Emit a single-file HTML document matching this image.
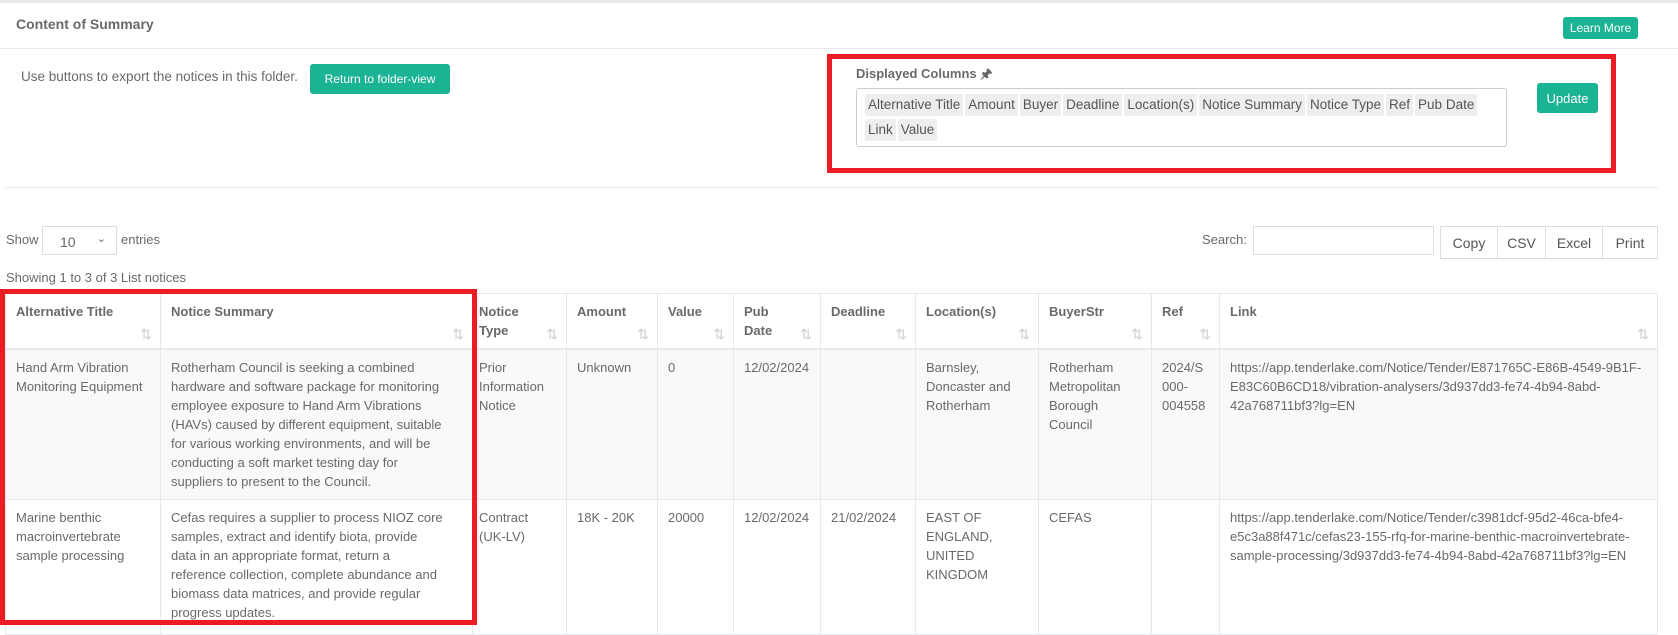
<!DOCTYPE html>
<html><head><meta charset="utf-8"><style>
*{box-sizing:border-box;margin:0;padding:0}
body{width:1678px;height:625px;overflow:hidden;background:#fff;font-family:"Liberation Sans",sans-serif;font-size:13px;color:#676a6c;position:relative}
.a{position:absolute}
.btn{position:absolute;background:#1ab394;color:#fff;border-radius:3px;display:flex;align-items:center;justify-content:center;font-size:12px}
.tag{display:inline-block;background:#eee;border-radius:2px;padding:0 3px;height:22px;line-height:22px;margin:0 2px 3px 0;color:#555;font-size:13.5px}
table{position:absolute;left:5px;top:293px;border-collapse:collapse;table-layout:fixed;width:1652px}
td,th{border:1px solid #e7eaec;vertical-align:top;text-align:left;padding:8px 10px;line-height:19px;font-size:13px}
th{font-weight:bold;color:#676a6c;height:55px;position:relative;border-bottom:2px solid #e7eaec;padding-top:8px}
th span{position:absolute;right:8px;bottom:4px;color:#d0d0d0;font-weight:normal;font-size:14px}
tr.s td{background:#f9f9f9}
td{color:#676a6c}
td.l{white-space:nowrap;padding-right:2px;overflow:hidden}
.red{position:absolute;border:5px solid #ed1c24}
.gb{position:absolute;top:226px;height:33px;border:1px solid #ddd;display:flex;align-items:center;justify-content:center;font-size:14px;color:#555;background:#fff}
</style></head><body>
<div class="a" style="left:0;top:0;width:1678px;height:3px;background:#e7eaec"></div>
<div class="a" style="left:16px;top:16px;font-size:14px;font-weight:bold;color:#676a6c">Content of Summary</div>
<div class="btn" style="left:1563px;top:17px;width:75px;height:22px">Learn More</div>
<div class="a" style="left:0;top:48px;width:1678px;height:1px;background:#e7eaec"></div>
<div class="a" style="left:21px;top:69px;font-size:13.5px">Use buttons to export the notices in this folder.</div>
<div class="btn" style="left:310px;top:64px;width:140px;height:30px">Return to folder-view</div>
<div class="a" style="left:856px;top:65px;font-weight:bold;font-size:13px">Displayed Columns &#128392;</div>
<div class="a" style="left:856px;top:88px;width:651px;height:59px;border:1px solid #ccc;border-radius:3px;padding:5px 8px">
<span class="tag">Alternative Title</span><span class="tag">Amount</span><span class="tag">Buyer</span><span class="tag">Deadline</span><span class="tag">Location(s)</span><span class="tag">Notice Summary</span><span class="tag">Notice Type</span><span class="tag">Ref</span><span class="tag">Pub Date</span><br><span class="tag">Link</span><span class="tag">Value</span></div>
<div class="btn" style="left:1537px;top:83px;width:61px;height:30px;font-size:13px">Update</div>
<div class="red" style="left:827px;top:54px;width:789px;height:119px"></div>
<div class="a" style="left:5px;top:187px;width:1653px;height:1px;background:#e7eaec"></div>
<div class="a" style="left:6px;top:232px">Show</div>
<div class="a" style="left:42px;top:226px;width:75px;height:29px;border:1px solid #ddd;padding:7px 0 0 17px;font-size:14px">10<span style="position:absolute;right:10px;top:5px;font-size:11px">&#8964;</span></div>
<div class="a" style="left:121px;top:232px">entries</div>
<div class="a" style="left:1202px;top:232px">Search:</div>
<div class="a" style="left:1253px;top:226px;width:181px;height:29px;border:1px solid #ddd"></div>
<div class="gb" style="left:1440px;width:58px">Copy</div>
<div class="gb" style="left:1497px;width:49px">CSV</div>
<div class="gb" style="left:1545px;width:58px">Excel</div>
<div class="gb" style="left:1602px;width:56px">Print</div>
<div class="a" style="left:6px;top:270px">Showing 1 to 3 of 3 List notices</div>
<table>
<colgroup><col style="width:155px"><col style="width:312px"><col style="width:94px"><col style="width:91px"><col style="width:76px"><col style="width:87px"><col style="width:95px"><col style="width:123px"><col style="width:113px"><col style="width:68px"><col style="width:438px"></colgroup>
<tr><th>Alternative Title<span>⇅</span></th><th>Notice Summary<span>⇅</span></th><th style="padding-left:6px">Notice<br>Type<span>⇅</span></th><th>Amount<span>⇅</span></th><th>Value<span>⇅</span></th><th>Pub<br>Date<span>⇅</span></th><th>Deadline<span>⇅</span></th><th>Location(s)<span>⇅</span></th><th>BuyerStr<span>⇅</span></th><th>Ref<span>⇅</span></th><th>Link<span>⇅</span></th></tr>
<tr class="s" style="height:148px"><td style="white-space:nowrap">Hand Arm Vibration<br>Monitoring Equipment</td><td>Rotherham Council is seeking a combined<br>hardware and software package for monitoring<br>employee exposure to Hand Arm Vibrations<br>(HAVs) caused by different equipment, suitable<br>for various working environments, and will be<br>conducting a soft market testing day for<br>suppliers to present to the Council.</td><td style="padding-left:6px">Prior<br>Information<br>Notice</td><td>Unknown</td><td>0</td><td>12/02/2024</td><td></td><td>Barnsley,<br>Doncaster and<br>Rotherham</td><td>Rotherham<br>Metropolitan<br>Borough<br>Council</td><td>2024/S<br>000-<br>004558</td><td class="l">https://app.tenderlake.com/Notice/Tender/E871765C-E86B-4549-9B1F-<br>E83C60B6CD18/vibration-analysers/3d937dd3-fe74-4b94-8abd-<br>42a768711bf3?lg=EN</td></tr>
<tr style="height:135px"><td>Marine benthic<br>macroinvertebrate<br>sample processing</td><td>Cefas requires a supplier to process NIOZ core<br>samples, extract and identify biota, provide<br>data in an appropriate format, return a<br>reference collection, complete abundance and<br>biomass data matrices, and provide regular<br>progress updates.</td><td style="padding-left:6px">Contract<br>(UK-LV)</td><td>18K - 20K</td><td>20000</td><td>12/02/2024</td><td>21/02/2024</td><td>EAST OF<br>ENGLAND,<br>UNITED<br>KINGDOM</td><td>CEFAS</td><td></td><td class="l">https://app.tenderlake.com/Notice/Tender/c3981dcf-95d2-46ca-bfe4-<br>e5c3a88f471c/cefas23-155-rfq-for-marine-benthic-macroinvertebrate-<br>sample-processing/3d937dd3-fe74-4b94-8abd-42a768711bf3?lg=EN</td></tr>
</table>
<div class="red" style="left:0;top:289px;width:477px;height:336px"></div>
</body></html>
